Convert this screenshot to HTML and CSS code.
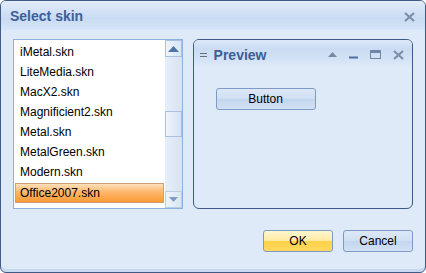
FILE: index.html
```html
<!DOCTYPE html>
<html>
<head>
	<title>Select skin</title>
	<link rel="stylesheet" href="styles.css">
</head>
<body>
<div class="window">
	<div class="titlebar">
		<span class="title">Select skin</span>
		<span class="close">
			<svg width="11" height="10" viewBox="0 0 11 10"><path d="M1 1L10 9M10 1L1 9" stroke="#7d8fa8" stroke-width="2.2"/></svg>
		</span>
	</div>

	<div class="content">
		<div class="panes">
			<div class="listbox">
				<ul class="items">
					<li>iMetal.skn</li>
					<li>LiteMedia.skn</li>
					<li>MacX2.skn</li>
					<li>Magnificient2.skn</li>
					<li>Metal.skn</li>
					<li>MetalGreen.skn</li>
					<li>Modern.skn</li>
					<li class="selected">Office2007.skn</li>
				</ul>
				<div class="scrollbar">
					<span class="sbtn up"><svg width="11" height="6" viewBox="0 0 11 6"><path d="M0 6L5.5 0L11 6Z" fill="#4f74a6"/></svg></span>
					<span class="track">
						<span class="thumb"></span>
					</span>
					<span class="sbtn down"><svg width="9" height="5" viewBox="0 0 9 5"><path d="M0 0L4.5 5L9 0Z" fill="#7f9cc4"/></svg></span>
				</div>
			</div>

			<div class="preview">
				<div class="ptitle">
					<span class="grip">
						<svg width="7" height="6" viewBox="0 0 7 6"><path d="M0 1.5H7M0 4.5H7" stroke="#6a6f78" stroke-width="1.2"/></svg>
					</span>
					<span class="pname">Preview</span>
					<span class="ctrls">
						<svg width="9" height="5" viewBox="0 0 9 5"><path d="M0 5L4.5 0L9 5Z" fill="#7889a2"/></svg>
						<svg width="9" height="9" viewBox="0 0 9 9"><path d="M0 7.5H9" stroke="#4e6f9e" stroke-width="2"/></svg>
						<svg width="11" height="9" viewBox="0 0 11 9"><rect x="0.5" y="0.5" width="10" height="8" fill="none" stroke="#6f86a8"/><path d="M0 2H11" stroke="#6f86a8" stroke-width="2"/></svg>
						<svg width="11" height="10" viewBox="0 0 11 10"><path d="M1 1L10 9M10 1L1 9" stroke="#7d8fa8" stroke-width="2.2"/></svg>
					</span>
				</div>
				<div class="pbody">
					<button class="btn">Button</button>
				</div>
			</div>
		</div>

		<div class="actions">
			<button class="btn ok">OK</button>
			<button class="btn">Cancel</button>
		</div>
	</div>
</div>
</body>
</html>
```

FILE: styles.css
```css
body,ul,li{
	margin:0;
	padding:0;
}
li{
	list-style: none;
}
body{
	width:426px;
	height:273px;
	overflow:hidden;
	font-family: "Liberation Sans", Arial, sans-serif;
}
.window{
	box-sizing:border-box;
	width:426px;
	height:273px;
	border:1px solid #3e5a85;
	border-radius:6px;
	background:#dfeaf9;
	display:flex;
	flex-direction:column;
	box-shadow: inset 0 -3px 0 #c8d8ee;
}
.titlebar{
	height:29px;
	display:flex;
	align-items:center;
	justify-content:space-between;
	padding:0 10px 0 9px;
	border-radius:5px 5px 0 0;
	background:linear-gradient(#e2ecfa, #c9dbf3 60%, #d6e4f6);
}
.title{
	font-size:14px;
	font-weight:bold;
	color:#3c5f97;
	padding-top:1px;
}
.close{
	display:flex;
	padding-top:2px;
}
.content{
	flex:1;
	padding:9px 12px 0 12px;
	display:flex;
	flex-direction:column;
}
.panes{
	display:flex;
	gap:10px;
	height:170px;
}
.listbox{
	box-sizing:border-box;
	width:170px;
	height:170px;
	border:1px solid #8cb0e0;
	background:#fff;
	display:flex;
}
.items{
	flex:1;
	padding:2px 1px 0 1px;
}
.items li{
	height:20px;
	line-height:20px;
	padding-left:5px;
	font-size:12px;
	color:#000;
}
.items li.selected{
	height:18px;
	line-height:18px;
	margin-top:1px;
	padding-left:4px;
	border:1px solid #c9a07a;
	background:linear-gradient(#fee0bb, #fdb76c 45%, #fb9a34 100%);
}
.scrollbar{
	width:17px;
	display:flex;
	flex-direction:column;
	background:linear-gradient(90deg, #e6eef9, #d7e3f4);
}
.sbtn{
	box-sizing:border-box;
	height:17px;
	border:1px solid #a9c2e3;
	background:linear-gradient(90deg, #eef4fc, #d9e5f5);
	display:flex;
	align-items:center;
	justify-content:center;
}
.sbtn.down{
	border-color:#b8cde8;
}
.track{
	flex:1;
	position:relative;
}
.thumb{
	position:absolute;
	left:0;
	right:0;
	top:54px;
	height:26px;
	box-sizing:border-box;
	border:1px solid #a9c2e3;
	background:linear-gradient(90deg, #eef4fc, #d6e2f3);
}
.preview{
	box-sizing:border-box;
	width:221px;
	height:170px;
	border:1px solid #3e5a85;
	border-radius:6px;
	background:#dfeaf9;
	display:flex;
	flex-direction:column;
}
.ptitle{
	height:27px;
	display:flex;
	align-items:center;
	padding:2px 8px 0 6px;
	box-sizing:border-box;
	border-radius:5px 5px 0 0;
	background:linear-gradient(#dfeaf9, #cadcf3 30%, #d3e2f5 70%, #dfeaf9);
}
.grip{
	display:flex;
	margin-right:7px;
}
.pname{
	font-size:14px;
	font-weight:bold;
	color:#3c5f97;
	flex:1;
}
.ctrls{
	display:flex;
	align-items:center;
	gap:12px;
}
.pbody{
	padding:21px 0 0 22px;
}
.btn{
	box-sizing:border-box;
	width:100px;
	height:22px;
	padding:0;
	border:1px solid #7e9bc6;
	border-radius:3px;
	background:linear-gradient(#dce8f7, #cfdff3 50%, #c3d6ef 51%, #d2e1f4);
	font-family: "Liberation Sans", Arial, sans-serif;
	font-size:12px;
	color:#000;
}
.actions{
	display:flex;
	justify-content:flex-end;
	gap:10px;
	padding-top:21px;
}
.actions .btn{
	width:70px;
}
.btn.ok{
	background:linear-gradient(#fff6d2, #ffeaa0 50%, #ffd24a 51%, #ffd85f);
}
```
